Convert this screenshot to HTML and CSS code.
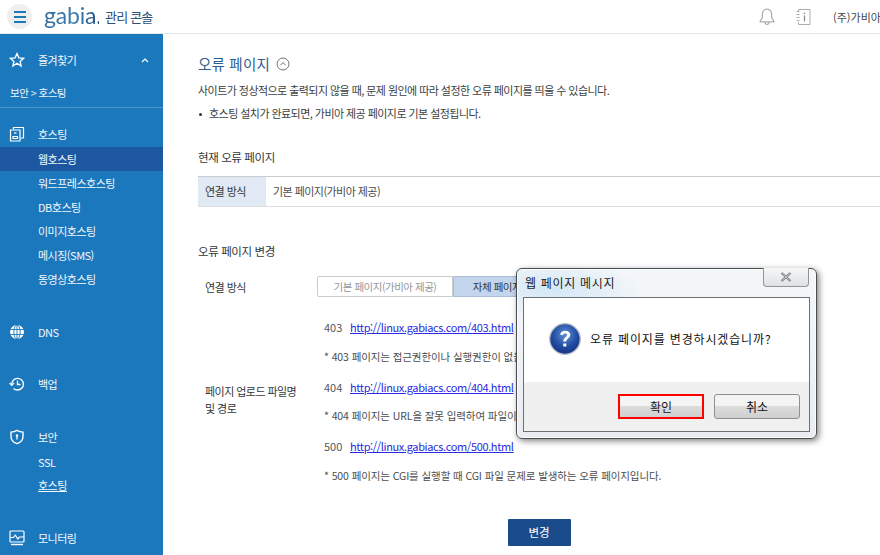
FILE: index.html
```html
<!DOCTYPE html>
<html lang="ko">
<head>
<meta charset="utf-8">
<title>오류 페이지</title>
<link rel="stylesheet" href="styles.css">
</head>
<body>
<header class="topbar">
  <button class="menu-btn" aria-label="메뉴"><span></span><span></span><span></span></button>
  <span class="logo">gabia.</span>
  <span class="console">관리 콘솔</span>
  <div class="top-right">
    <svg class="top-icon bell" width="16" height="18" viewBox="0 0 16 18" fill="none" stroke="#a9adb0" stroke-width="1.2"><path d="M8 1.2c-3 0-4.6 2.2-4.6 5v3.4L1.2 13v.8h13.6V13l-2.2-3.4V6.200c0-2.800-1.600-5-4.600-5z"/><path d="M5.800 14c.2 1.500 1.100 2.400 2.200 2.400s2-.9 2.200-2.400"/></svg>
    <svg class="top-icon info" width="15" height="18" viewBox="0 0 15 18" fill="none" stroke="#a9adb0" stroke-width="1"><path d="M2.500 1.500h11.500v15H2.500"/><path d="M.5 3.500h3M.5 6.500h3M.5 9.500h3M.5 12.500h3M2.500 1.500v2M2.500 14v2.500" stroke-width="1"/><path d="M8.500 7.500v6M8.500 4.500v1.500" stroke="#8d9194" stroke-width="1.300"/></svg>
    <span class="company">(주)가비아</span>
  </div>
</header>
<div class="layout">
  <nav class="sidebar">
    <div class="nav-head fav">
      <svg class="nav-icon" width="16" height="16" viewBox="0 0 16 16" fill="none" stroke="#fff" stroke-width="1.300"><path d="M8 1.500l1.900 4.300 4.700.5-3.500 3.100 1 4.600L8 11.200l-4.100 2.800 1-4.600L1.400 6.300l4.700-.5z"/></svg>
      <span class="nav-label">즐겨찾기</span>
      <svg class="caret" width="8" height="5" viewBox="0 0 8 5" fill="none" stroke="#fff" stroke-width="1.200"><path d="M1 4l3-3 3 3"/></svg>
    </div>
    <div class="crumb">보안 &gt; 호스팅</div>
    <div class="nav-group first">
      <div class="nav-head">
        <svg class="nav-icon" width="16" height="16" viewBox="0 0 16 16" fill="none" stroke="#fff" stroke-width="1.200"><path d="M4.500 3.500V1.500h10v10.500h-3"/><path d="M1.500 4h9.500v11H1.500z"/><path d="M4 10.500h4.500v2H4z"/><path d="M5 7h2.500"/></svg>
        <span class="nav-label">호스팅</span>
      </div>
      <a class="nav-item active">웹호스팅</a>
      <a class="nav-item">워드프레스호스팅</a>
      <a class="nav-item">DB호스팅</a>
      <a class="nav-item">이미지호스팅</a>
      <a class="nav-item">메시징(SMS)</a>
      <a class="nav-item">동영상호스팅</a>
    </div>
    <div class="nav-group dns">
      <div class="nav-head">
        <svg class="nav-icon" width="16" height="16" viewBox="0 0 16 16" fill="#fff"><circle cx="8" cy="8" r="7"/><g fill="none" stroke="#1c78bd" stroke-width=".9"><ellipse cx="8" cy="8" rx="3.200" ry="7"/><path d="M8 1v14M1 5.500h14M1 10.500h14"/></g></svg>
        <span class="nav-label">DNS</span>
      </div>
    </div>
    <div class="nav-group backup">
      <div class="nav-head">
        <svg class="nav-icon" width="16" height="16" viewBox="0 0 16 16" fill="none" stroke="#fff" stroke-width="1.300"><path d="M2.800 8.500A5.800 5.800 0 1 1 8.500 14 5.700 5.700 0 0 1 4.500 12.500"/><path d="M.6 7l2.200 2.400L5 7" stroke-width="1.200"/><path d="M8.500 4.500v4h3"/></svg>
        <span class="nav-label">백업</span>
      </div>
    </div>
    <div class="nav-group security">
      <div class="nav-head">
        <svg class="nav-icon" width="16" height="16" viewBox="0 0 16 16" fill="none" stroke="#fff" stroke-width="1.400"><path d="M8 1.300c2 1.200 4 1.700 6 1.800v4.400c0 3.400-2.400 5.900-6 7.200-3.600-1.300-6-3.800-6-7.200V3.100c2-.1 4-.6 6-1.800z"/><circle cx="8" cy="6.500" r="1.200" fill="#fff" stroke="none"/><path d="M8 7v3.500" stroke-width="1.300"/></svg>
        <span class="nav-label">보안</span>
      </div>
      <div class="sub-list">
        <a class="nav-item">SSL</a>
        <a class="nav-item current">호스팅</a>
      </div>
    </div>
    <div class="nav-group monitor">
      <div class="nav-head">
        <svg class="nav-icon" width="16" height="16" viewBox="0 0 16 16" fill="none" stroke="#fff" stroke-width="1.200"><rect x="1" y="1" width="14" height="11" rx="1"/><path d="M1.500 7.500h3l1.800-2.500 2.500 4 1.700-2h4.500"/><path d="M2 14.500h12" stroke-width="1.400"/></svg>
        <span class="nav-label">모니터링</span>
      </div>
    </div>
  </nav>
  <main class="content">
    <h1 class="page-title">오류 페이지
      <svg class="title-icon" width="14" height="14" viewBox="0 0 14 14" fill="none" stroke="#6d7479" stroke-width="1"><circle cx="7" cy="7" r="6"/><path d="M4.300 8.300L7 5.500l2.700 2.800"/></svg>
    </h1>
    <p class="desc">사이트가 정상적으로 출력되지 않을 때, 문제 원인에 따라 설정한 오류 페이지를 띄울 수 있습니다.</p>
    <p class="bullet">호스팅 설치가 완료되면, 가비아 제공 페이지로 기본 설정됩니다.</p>
    <h2 class="section">현재 오류 페이지</h2>
    <div class="info-row">
      <div class="info-key">연결 방식</div>
      <div class="info-val">기본 페이지(가비아 제공)</div>
    </div>
    <h2 class="section second">오류 페이지 변경</h2>
    <div class="form-row conn">
      <div class="form-key">연결 방식</div>
      <div class="seg">
        <span class="seg-btn">기본 페이지(가비아 제공)</span>
        <span class="seg-btn on">자체 페이지 업로드</span>
      </div>
    </div>
    <div class="form-row upload">
      <div class="form-key">페이지 업로드 파일명<br>및 경로</div>
      <div class="files">
        <p class="file"><span class="code">403</span><a class="link">http://linux.gabiacs.com/403.html</a></p>
        <p class="note">* 403 페이지는 접근권한이나 실행권한이 없을 때 발생하는 오류 페이지입니다.</p>
        <p class="file"><span class="code">404</span><a class="link">http://linux.gabiacs.com/404.html</a></p>
        <p class="note">* 404 페이지는 URL을 잘못 입력하여 파일이 없을 때 발생하는 오류 페이지입니다.</p>
        <p class="file"><span class="code">500</span><a class="link">http://linux.gabiacs.com/500.html</a></p>
        <p class="note">* 500 페이지는 CGI를 실행할 때 CGI 파일 문제로 발생하는 오류 페이지입니다.</p>
      </div>
    </div>
    <div class="actions"><button class="submit">변경</button></div>
  </main>
</div>
<div class="dialog">
  <div class="dlg-title">웹 페이지 메시지</div>
  <div class="dlg-close"><svg width="12" height="10" viewBox="0 0 12 10"><path d="M1.500 1l9 8M10.500 1l-9 8" stroke="#6f747a" stroke-width="2.200" fill="none"/><path d="M1.500 1l9 8M10.500 1l-9 8" stroke="#e8eaec" stroke-width=".7" fill="none"/></svg></div>
  <div class="dlg-panel">
    <div class="dlg-body">
      <svg class="dlg-icon" width="32" height="32" viewBox="0 0 32 32">
        <defs>
          <radialGradient id="qb" cx="50%" cy="35%" r="70%"><stop offset="0" stop-color="#5f8fd6"/><stop offset=".6" stop-color="#1f4aa0"/><stop offset="1" stop-color="#14307c"/></radialGradient>
        </defs>
        <circle cx="16" cy="16" r="15.300" fill="url(#qb)" stroke="#b9bec6" stroke-width="1.300"/>
        <path d="M11 11.500c.6-2.500 2.700-3.800 5.300-3.800 3 0 5 1.700 5 4.100 0 3.500-4 3.700-4 6.700h-3c0-4 3.700-4.300 3.700-6.500 0-1-.7-1.700-1.800-1.700-1.200 0-1.900.8-2.200 2z" fill="#fff"/>
        <rect x="14.300" y="20.500" width="3" height="3" fill="#fff"/>
      </svg>
      <span class="dlg-msg">오류 페이지를 변경하시겠습니까?</span>
    </div>
    <div class="dlg-foot">
      <button class="dlg-btn primary">확인</button>
      <button class="dlg-btn">취소</button>
    </div>
  </div>
</div>
</body>
</html>
```
FILE: styles.css
```css
* { box-sizing: border-box; }
html, body { margin: 0; height: 100%; overflow: hidden; }
body {
  font-family: "Noto Sans CJK KR", "Noto Sans", sans-serif;
  font-size: 11px;
  color: #3c3f42;
  background: #fff;
  position: relative;
}
p, h1, h2 { margin: 0; font-weight: 400; }

.topbar {
  height: 34px;
  display: flex;
  align-items: center;
  padding-left: 7px;
  background: #fff;
  border-bottom: 1px solid #e6e7e8;
}
.menu-btn {
  width: 25px;
  height: 25px;
  border: 0;
  padding: 0;
  border-radius: 50%;
  background: #efefef;
  display: flex;
  flex-direction: column;
  align-items: center;
  justify-content: center;
  gap: 3px;
}
.menu-btn span { width: 12px; height: 2px; background: #1c78bd; display: block; }
.logo {
  margin-left: 12px;
  width: 55px;
  flex: none;
  font-family: "Lato", sans-serif;
  font-size: 23px;
  line-height: 30px;
  font-weight: 400;
  letter-spacing: -.2px;
  color: #3f6f97;
  background: linear-gradient(90deg, #2f6a9c 0%, #3f7eae 60%, #1c4a80 100%);
  -webkit-background-clip: text;
  background-clip: text;
  -webkit-text-fill-color: transparent;
  position: relative;
  top: -2px;
}
.console { margin-left: 6px; font-size: 13px; letter-spacing: -.8px; color: #2d4f78; }
.top-right { margin-left: auto; display: flex; align-items: center; }
.top-icon { display: block; }
.info { margin-left: 21px; }
.company { margin-left: 22px; width: 47px; white-space: nowrap; overflow: hidden; color: #44474a; font-size: 11px; }

.layout { display: flex; height: 521px; }
.sidebar {
  width: 163px;
  flex: none;
  background: #1c78bd;
  color: #f2f7fb;
  padding-top: 14px;
  overflow: hidden;
  letter-spacing: -.5px;
}
.nav-head {
  height: 24px;
  display: flex;
  align-items: center;
  padding-left: 9px;
  position: relative;
}
.nav-icon { flex: none; display: block; }
.nav-label { margin-left: 13px; font-size: 11px; }
.caret { margin-left: auto; margin-right: 14px; }
.crumb {
  height: 35px;
  padding: 12px 0 0 10px;
  margin-top: 1px;
  border-bottom: 1px solid #4b93ca;
  font-size: 10.500px;
  line-height: 16px;
}
.nav-group.first { margin-top: 15px; }
.nav-group.first .nav-head { padding-bottom: 2px; }
.nav-group.dns { margin-top: 29px; }
.nav-group.backup { margin-top: 28px; }
.nav-group.security { margin-top: 29px; }
.nav-group.monitor { margin-top: 28px; }
.sub-list { padding-top: 1px; }
.nav-item {
  display: block;
  height: 24px;
  line-height: 24px;
  padding-left: 38px;
  font-size: 11px;
}
.nav-item.active { background: #1c579f; }
.nav-item.current { text-decoration: underline; text-underline-offset: 1px; line-height: 22px; }

.content {
  flex: 1;
  min-width: 0;
  padding: 19px 0 0 35px;
  overflow: hidden;
  letter-spacing: -.55px;
}
.page-title {
  display: flex;
  align-items: center;
  gap: 6px;
  height: 20px;
  font-size: 14.500px;
  letter-spacing: .2px;
  color: #2e5d8e;
}
.title-icon { display: block; margin-top: 2px; }
.desc { margin-top: 6px; height: 23px; line-height: 23px; }
.bullet { position: relative; padding-left: 11px; height: 23px; line-height: 23px; }
.bullet::before {
  content: "";
  position: absolute;
  left: 1px;
  top: 11px;
  width: 3px;
  height: 3px;
  border-radius: 50%;
  background: #333;
}
.section { margin-top: 21px; height: 22px; line-height: 22px; font-size: 11.500px; letter-spacing: -.4px; color: #33363a; }
.section.second { margin-top: 33px; }
.info-row {
  display: flex;
  margin-top: 8px;
  height: 31px;
  border-top: 1px solid #c9cccf;
  border-bottom: 1px solid #dcdee0;
  align-items: stretch;
}
.info-key {
  width: 67px;
  flex: none;
  background: #e1eaf4;
  padding-left: 7px;
  line-height: 29px;
  color: #33363a;
}
.info-val { flex: 1; padding-left: 7px; line-height: 29px; border-left: 1px solid #e4e6e8; color: #4a4d50; }

.form-row { display: flex; }
.form-key { width: 119px; flex: none; padding-left: 7px; color: #33363a; }
.conn { margin-top: 14px; align-items: center; }
.seg { display: flex; height: 21px; }
.seg-btn {
  display: flex;
  align-items: center;
  justify-content: center;
  border: 1px solid #c9cccf;
  font-size: 10.500px;
  letter-spacing: -.48px;
  color: #94979a;
  width: 136px;
  border-radius: 2px 0 0 2px;
}
.seg-btn.on {
  background: #c2d5ec;
  border-color: #a9bdd6;
  color: #33363a;
  border-radius: 0 2px 2px 0;
  width: 118px;
}
.upload { margin-top: 14px; align-items: center; }
.upload .form-key { line-height: 17px; padding-top: 5px; }
.files { margin-left: 7px; padding-top: 7px; }
.file, .note { white-space: nowrap; line-height: 18px; height: 18px; }
.file { margin-bottom: 11.500px; color: #55585b; }
.note { margin-bottom: 12px; color: #4a4d50; font-size: 10.500px; letter-spacing: -.1px; }
.note:last-child { margin-bottom: 0; }
.code { display: inline-block; width: 26px; letter-spacing: 0; }
.link { color: #2a2ae0; text-decoration: underline; letter-spacing: -.36px; }

.actions { display: flex; justify-content: center; margin-top: 34px; }
.submit {
  width: 63px;
  height: 27px;
  border: 0;
  border-radius: 1px;
  background: #1a4c8b;
  color: #fff;
  font: inherit;
  font-size: 11.500px;
}

.dialog {
  position: absolute;
  left: 516px;
  top: 268px;
  width: 301px;
  height: 171px;
  border-radius: 6px;
  border: 1px solid #4a4d50;
  background:
    radial-gradient(ellipse 90px 30px at 35px 20px, rgba(200,226,245,.75), rgba(255,255,255,0) 100%),
    linear-gradient(#f4f7fa, #e9edf1);
  box-shadow: 2px 2px 6px rgba(0,0,0,.5), inset 0 0 0 1px rgba(255,255,255,.8);
}
.dlg-title {
  position: absolute;
  left: 8px;
  top: 5px;
  font-size: 12px;
  line-height: 18px;
  letter-spacing: .7px;
  color: #1c1c1c;
}
.dlg-close {
  position: absolute;
  right: 7px;
  top: -1px;
  width: 46px;
  height: 19px;
  border: 1px solid #8f9499;
  border-top: 0;
  border-radius: 0 0 4px 4px;
  background: linear-gradient(#f5f6f7, #dfe2e5);
  display: flex;
  align-items: center;
  justify-content: center;
}
.dlg-panel {
  position: absolute;
  left: 6px;
  top: 28px;
  width: 287px;
  height: 135px;
  border: 1px solid #6b7075;
  background: #fff;
  display: flex;
  flex-direction: column;
}
.dlg-body {
  height: 84px;
  display: flex;
  align-items: center;
  padding: 0 0 3px 25px;
  gap: 9px;
}
.dlg-icon { display: block; flex: none; }
.dlg-msg { font-size: 12px; letter-spacing: .85px; color: #111; }
.dlg-foot {
  flex: 1;
  background: #f0f0f0;
  display: flex;
  justify-content: flex-end;
  align-items: flex-start;
  gap: 10px;
  padding: 12px 9px 0 0;
}
.dlg-btn {
  width: 86px;
  height: 25px;
  padding: 0;
  border: 1px solid #8e8f91;
  border-radius: 3px;
  background: linear-gradient(#f4f4f4 0 45%, #dcdcdc 50%, #cfcfcf);
  font: inherit;
  font-size: 12px;
  color: #111;
}
.dlg-btn.primary { border: 2px solid #f00; border-radius: 0; }
```
